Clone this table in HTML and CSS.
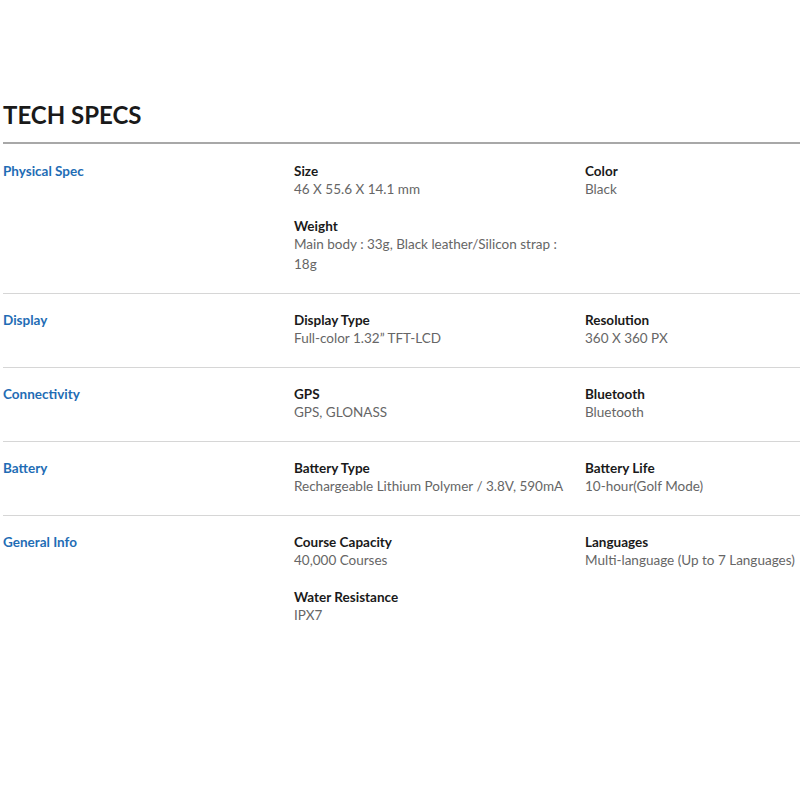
FILE: index.html
```html
<!DOCTYPE html>
<html>
<head>
<meta charset="utf-8">
<link rel="stylesheet" href="styles.css">
</head>
<body>
<div class="specs">
  <h1 class="title">TECH SPECS</h1>
  <div class="row first">
    <div class="label">Physical Spec</div>
    <div class="col">
      <div class="item"><div class="name">Size</div><div class="value">46 X 55.6 X 14.1 mm</div></div>
      <div class="item"><div class="name">Weight</div><div class="value">Main body : 33g, Black leather/Silicon strap : 18g</div></div>
    </div>
    <div class="col">
      <div class="item"><div class="name">Color</div><div class="value">Black</div></div>
    </div>
  </div>
  <div class="row">
    <div class="label">Display</div>
    <div class="col">
      <div class="item"><div class="name">Display Type</div><div class="value">Full-color 1.32” TFT-LCD</div></div>
    </div>
    <div class="col">
      <div class="item"><div class="name">Resolution</div><div class="value">360 X 360 PX</div></div>
    </div>
  </div>
  <div class="row">
    <div class="label">Connectivity</div>
    <div class="col">
      <div class="item"><div class="name">GPS</div><div class="value">GPS, GLONASS</div></div>
    </div>
    <div class="col">
      <div class="item"><div class="name">Bluetooth</div><div class="value">Bluetooth</div></div>
    </div>
  </div>
  <div class="row">
    <div class="label">Battery</div>
    <div class="col">
      <div class="item"><div class="name">Battery Type</div><div class="value">Rechargeable Lithium Polymer / 3.8V, 590mA</div></div>
    </div>
    <div class="col">
      <div class="item"><div class="name">Battery Life</div><div class="value">10-hour(Golf Mode)</div></div>
    </div>
  </div>
  <div class="row">
    <div class="label">General Info</div>
    <div class="col">
      <div class="item"><div class="name">Course Capacity</div><div class="value">40,000 Courses</div></div>
      <div class="item"><div class="name">Water Resistance</div><div class="value">IPX7</div></div>
    </div>
    <div class="col">
      <div class="item"><div class="name">Languages</div><div class="value">Multi-language (Up to 7 Languages)</div></div>
    </div>
  </div>
</div>
</body>
</html>
```
FILE: styles.css
```css
html, body {
  margin: 0;
  padding: 0;
  background: #fff;
}
body {
  font-family: Lato, "Open Sans", sans-serif;
  color: #1c1c1c;
}
.specs {
  padding: 96px 0 0 3px;
}
.title {
  margin: 0;
  font-size: 24px;
  line-height: 38px;
  font-weight: 700;
  color: #1a1a1a;
  padding-bottom: 8px;
  border-bottom: 2px solid #a8a8a8;
}
.row {
  display: grid;
  grid-template-columns: 291px 291px 1fr;
  padding: 19px 0;
  border-top: 1px solid #d6d6d6;
}
.row.first {
  border-top: none;
  padding-top: 20px;
}
.label {
  font-size: 13.5px;
  line-height: 15px;
  font-weight: 700;
  color: #1f6db5;
}
.col {
  display: flex;
  flex-direction: column;
  gap: 20px;
}
.name {
  font-size: 13.5px;
  line-height: 15px;
  font-weight: 700;
  color: #1a1a1a;
}
.value {
  font-size: 13.5px;
  line-height: 20px;
  color: #666;
  width: 280px;
}
.col:last-child .value {
  width: auto;
  white-space: nowrap;
}
```
